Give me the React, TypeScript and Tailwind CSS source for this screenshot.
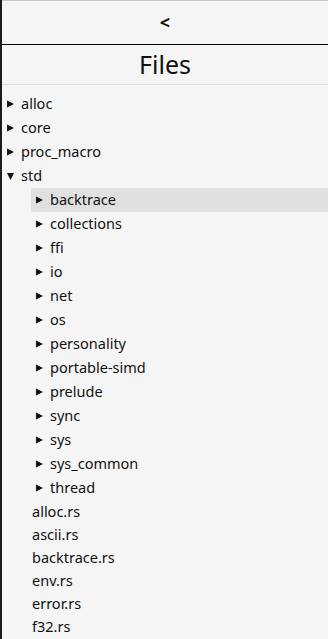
import React from 'react';

const stdDirs = [
  'backtrace',
  'collections',
  'ffi',
  'io',
  'net',
  'os',
  'personality',
  'portable-simd',
  'prelude',
  'sync',
  'sys',
  'sys_common',
  'thread',
];

const stdFiles = ['alloc.rs', 'ascii.rs', 'backtrace.rs', 'env.rs', 'error.rs', 'f32.rs'];

const Arrow = ({ open }: { open?: boolean }) => (
  <svg width="7" height="8" viewBox="0 0 7 8" className="shrink-0">
    {open ? <path d="M0 1h7L3.5 8z" fill="#111" /> : <path d="M0 0.5l7 3.5-7 3.5z" fill="#111" />}
  </svg>
);

const Row = ({ label, active }: { label: string; active?: boolean }) => (
  <div className={`flex items-center h-6 shrink-0 pl-[5px] gap-[7px] ${active ? 'bg-[#e0e0e0]' : ''}`}>
    <Arrow />
    <span>{label}</span>
  </div>
);

export default function App() {
  return (
    <div
      className="h-[639px] w-[328px] flex bg-[#f5f5f5] overflow-hidden text-[#111] text-[14.5px]"
      style={{ fontFamily: '"Noto Sans", "Open Sans", sans-serif' }}
    >
      <div className="w-[2px] shrink-0 bg-[#1c1c1c]" />
      <div className="flex-1 flex flex-col border-t border-[#c8c8c8] overflow-hidden">
        <div className="h-[44px] shrink-0 flex items-center justify-center border-b border-black text-[18px] font-bold">
          &lt;
        </div>
        <div className="h-10 shrink-0 flex items-center justify-center text-[25px] border-b border-[#dcdcdc]">
          Files
        </div>
        <div className="pt-[7px] shrink-0">
          {['alloc', 'core', 'proc_macro'].map((d) => (
            <Row key={d} label={d} />
          ))}
          <div className="flex items-center h-6 pl-[5px] gap-[7px]">
            <Arrow open />
            <span>std</span>
          </div>
          <div className="pl-[29px]">
            {stdDirs.map((d, i) => (
              <Row key={d} label={d} active={i === 0} />
            ))}
            {stdFiles.map((f) => (
              <div key={f} className="h-[23px] flex items-center pl-px">
                {f}
              </div>
            ))}
          </div>
        </div>
      </div>
    </div>
  );
}
